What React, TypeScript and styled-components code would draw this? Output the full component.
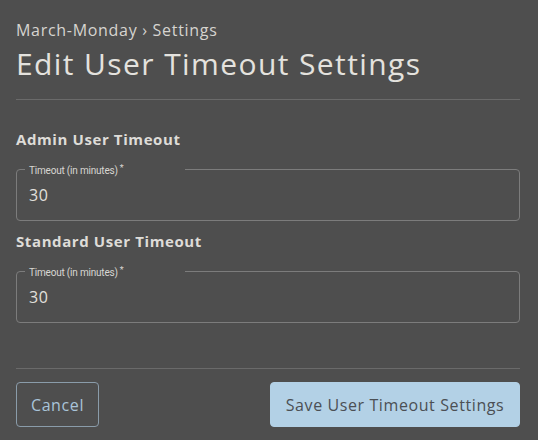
import React, { FC } from 'react';
import styled, { createGlobalStyle } from 'styled-components';

const GlobalStyle = createGlobalStyle`
  html, body {
    margin: 0;
    padding: 0;
    background: #4e4e4e;
  }
  * {
    box-sizing: border-box;
  }
`;

const Page = styled.div`
  width: 538px;
  height: 440px;
  background: #4e4e4e;
  padding: 20px 18px 0 16px;
  font-family: 'Open Sans', 'Lato', sans-serif;
  color: #e2e0dc;
  display: flex;
  flex-direction: column;
`;

const Breadcrumb = styled.div`
  font-size: 16px;
  line-height: 20px;
  letter-spacing: 0.7px;
  color: #d6d4d0;
  font-weight: 500;
`;

const Title = styled.h1`
  margin: 4px 0 0;
  font-size: 30px;
  line-height: 40px;
  font-weight: 400;
  letter-spacing: 1.4px;
  color: #e4e2de;
`;

const Divider = styled.hr`
  margin: 0;
  border: none;
  border-top: 1px solid #6a6a6a;
`;

const TopDivider = styled(Divider)`
  margin-top: 15px;
`;

const Section = styled.div`
  display: flex;
  flex-direction: column;
`;

const SectionTitle = styled.div<{ first?: boolean }>`
  margin-top: ${({ first }) => (first ? '29px' : '10px')};
  font-size: 15px;
  line-height: 20px;
  font-weight: 700;
  letter-spacing: 0.6px;
  color: #dedcd8;
`;

const Fieldset = styled.fieldset`
  margin: 13px 0 0;
  padding: 0 12px 10px;
  height: 59px;
  border: 1px solid #7c7c7c;
  border-radius: 4px;
`;

const Legend = styled.legend`
  padding: 0 2px 0 4px;
  margin-left: -4px;
  font-family: 'Roboto', 'Open Sans', sans-serif;
  font-size: 10px;
  line-height: 12px;
  color: #d8d6d2;
  letter-spacing: -0.2px;
  width: 160px;
`;

const Star = styled.sup`
  font-size: 9px;
  margin-left: 2px;
  vertical-align: 3px;
`;

const Value = styled.div`
  margin-top: 8px;
  font-size: 16px;
  line-height: 20px;
  letter-spacing: 0.5px;
  color: #e2e0dc;
`;

const Spacer = styled.div`
  height: 45px;
`;

const Footer = styled.div`
  display: flex;
  justify-content: space-between;
  margin-top: 13px;
`;

const Button = styled.button<{ primary?: boolean }>`
  height: 45px;
  padding: 0 12px;
  border-radius: 4px;
  font-family: 'Open Sans', 'Lato', sans-serif;
  font-size: 16px;
  letter-spacing: 0.6px;
  cursor: pointer;
  border: 1px solid ${({ primary }) => (primary ? '#b3d1e6' : '#8a9caa')};
  background: ${({ primary }) => (primary ? '#b3d1e6' : 'transparent')};
  color: ${({ primary }) => (primary ? '#4b4f54' : '#a9c4d9')};
  width: ${({ primary }) => (primary ? '250px' : '83px')};
`;

interface TimeoutFieldProps {
  title: string;
  value: string;
  first?: boolean;
}

const TimeoutField: FC<TimeoutFieldProps> = ({ title, value, first }) => (
  <Section>
    <SectionTitle first={first}>{title}</SectionTitle>
    <Fieldset>
      <Legend>
        Timeout (in minutes)<Star>*</Star>
      </Legend>
      <Value>{value}</Value>
    </Fieldset>
  </Section>
);

const App: FC = () => {
  return (
    <>
      <GlobalStyle />
      <Page>
        <Breadcrumb>March-Monday › Settings</Breadcrumb>
        <Title>Edit User Timeout Settings</Title>
        <TopDivider />
        <TimeoutField title="Admin User Timeout" value="30" first />
        <TimeoutField title="Standard User Timeout" value="30" />
        <Spacer />
        <Divider />
        <Footer>
          <Button>Cancel</Button>
          <Button primary>Save User Timeout Settings</Button>
        </Footer>
      </Page>
    </>
  );
};

export default App;
